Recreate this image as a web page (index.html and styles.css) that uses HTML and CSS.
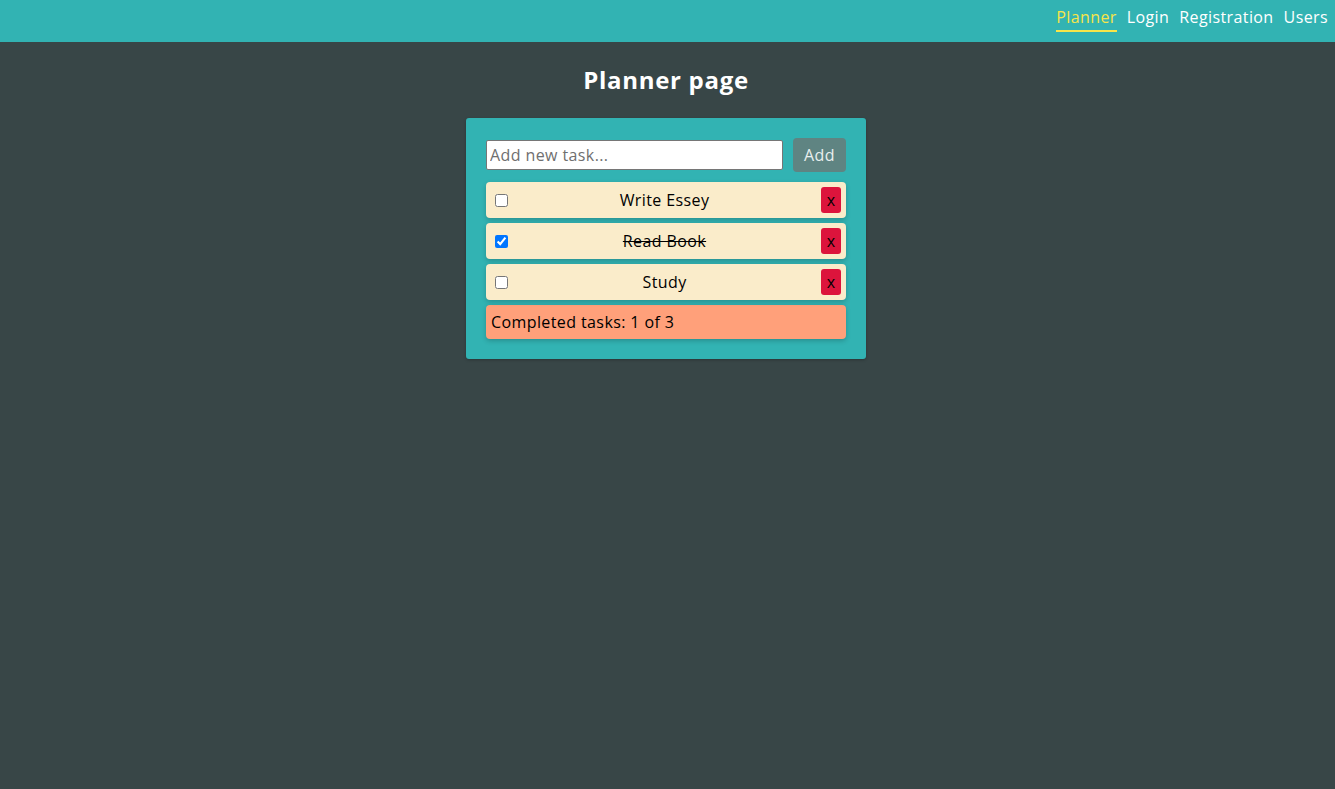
FILE: index.html
```html
<!DOCTYPE html>
<html lang="en">
<head>
<meta charset="utf-8">
<title>Planner</title>
<link rel="stylesheet" href="styles.css">
</head>
<body>
<header class="navbar">
  <nav class="nav-links">
    <a class="nav-link active" href="#">Planner</a>
    <a class="nav-link" href="#">Login</a>
    <a class="nav-link" href="#">Registration</a>
    <a class="nav-link" href="#">Users</a>
  </nav>
</header>
<main class="page">
  <h1 class="title">Planner page</h1>
  <section class="card">
    <form class="add-form">
      <input class="task-input" type="text" placeholder="Add new task...">
      <button class="add-btn" type="button">Add</button>
    </form>
    <ul class="task-list">
      <li class="task">
        <input class="task-check" type="checkbox">
        <span class="task-text">Write Essey</span>
        <button class="del-btn" type="button">x</button>
      </li>
      <li class="task">
        <input class="task-check" type="checkbox" checked>
        <span class="task-text done">Read Book</span>
        <button class="del-btn" type="button">x</button>
      </li>
      <li class="task">
        <input class="task-check" type="checkbox">
        <span class="task-text">Study</span>
        <button class="del-btn" type="button">x</button>
      </li>
    </ul>
    <div class="summary">Completed tasks: 1 of 3</div>
  </section>
</main>
</body>
</html>
```
FILE: styles.css
```css
* { box-sizing: border-box; }
html, body {
  margin: 0;
  padding: 0;
}
body {
  background: #384647;
  font-family: "Open Sans", "Liberation Sans", sans-serif;
  letter-spacing: 0.4px;
  color: #000;
  min-height: 789px;
}
.navbar {
  height: 42px;
  background: #32b3b3;
  display: flex;
  justify-content: flex-end;
  align-items: flex-start;
  padding: 0 7px 0 0;
}
.nav-links {
  display: flex;
  gap: 10px;
  padding-top: 6px;
}
.nav-link {
  color: #fff;
  text-decoration: none;
  font-size: 16px;
  line-height: 22px;
  padding-bottom: 2px;
  border-bottom: 2px solid transparent;
}
.nav-link.active {
  color: #f7e549;
  border-bottom-color: #f7e549;
}
.page {
  display: flex;
  flex-direction: column;
  align-items: center;
  padding-right: 3px;
}
.title {
  margin: 22px 0 22px;
  font-size: 24px;
  line-height: 32px;
  font-weight: 700;
  letter-spacing: 0.7px;
  color: #fff;
}
.card {
  width: 400px;
  background: #32b3b3;
  border-radius: 3px;
  padding: 20px;
  box-shadow: 0 1px 3px rgba(0,0,0,0.25);
}
.add-form {
  display: flex;
  align-items: center;
  gap: 10px;
  margin: 0 0 10px;
}
.task-input {
  width: 297px;
  height: 30px;
  border: 1px solid #767676;
  border-radius: 2px;
  padding: 1px 3px;
  font-family: inherit;
  letter-spacing: inherit;
  font-size: 16px;
  color: #333;
  background: #fff;
}
.task-input::placeholder { color: #6f6f6f; }
.add-btn {
  width: 53px;
  height: 34px;
  border: none;
  border-radius: 4px;
  background: #5f8482;
  color: #e8efee;
  font-family: inherit;
  letter-spacing: inherit;
  font-size: 16px;
  padding: 0;
}
.task-list {
  list-style: none;
  margin: 0;
  padding: 0;
  display: flex;
  flex-direction: column;
  gap: 5px;
}
.task {
  height: 36px;
  background: #faecca;
  border-radius: 4px;
  display: flex;
  align-items: center;
  padding: 0 5px 0 9px;
  box-shadow: 0 2px 5px rgba(0,0,0,0.2);
}
.task-check {
  width: 13px;
  height: 13px;
  margin: 0;
}
.task-text {
  flex: 1;
  text-align: center;
  font-size: 16px;
}
.task-text.done { text-decoration: line-through; }
.del-btn {
  width: 20px;
  height: 26px;
  border: none;
  border-radius: 3px;
  background: #dc143c;
  color: #000;
  font-family: inherit;
  font-size: 16px;
  padding: 0;
}
.summary {
  margin-top: 5px;
  height: 34px;
  background: #ffa07a;
  border-radius: 4px;
  padding: 0 5px;
  display: flex;
  align-items: center;
  font-size: 16px;
  box-shadow: 0 2px 5px rgba(0,0,0,0.2);
}
```
